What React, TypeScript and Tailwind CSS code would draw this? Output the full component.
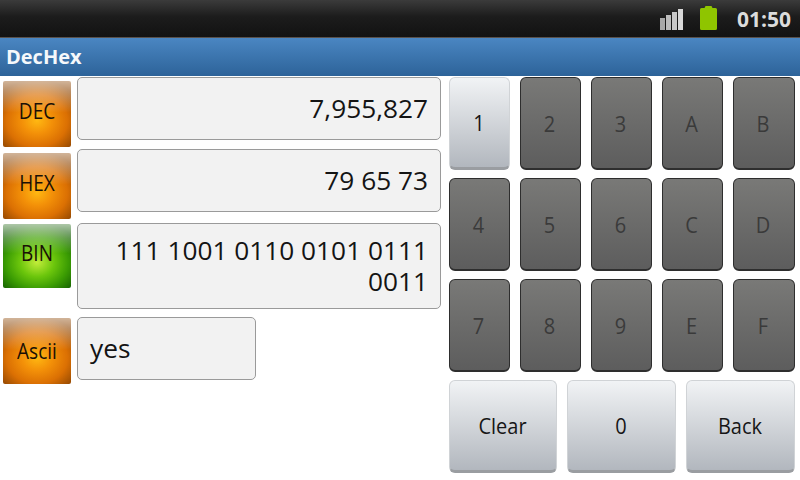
const orangeLabel =
  "bg-[linear-gradient(180deg,rgba(255,255,255,0.6)_0%,rgba(255,255,255,0.34)_20%,rgba(255,255,255,0)_48%),radial-gradient(ellipse_70%_62%_at_50%_60%,#ffb812_0%,#f39008_32%,#db7003_64%,#8c4402_100%)]";
const greenLabel =
  "bg-[linear-gradient(180deg,rgba(255,255,255,0.66)_0%,rgba(255,255,255,0.3)_22%,rgba(255,255,255,0)_46%),radial-gradient(ellipse_70%_62%_at_50%_60%,#c2ec3a_0%,#6cc60c_36%,#3b9c03_66%,#125c02_100%)]";

function Label({ text, green, h = "h-[66px]", drop = "pb-[6px]" }: { text: string; green?: boolean; h?: string; drop?: string }) {
  return (
    <div
      className={`w-[68px] ${h} ${drop} shrink-0 rounded-[2px] flex items-center justify-center text-[19px] text-[#1a1006] ${green ? greenLabel : orangeLabel}`}
    >
      <span className="inline-block scale-y-[1.15]">{text}</span>
    </div>
  );
}

function Field({ children, className }: { children: React.ReactNode; className: string }) {
  return (
    <div
      className={`bg-[#f2f2f2] border border-[#9a9a9a] rounded-[5px] text-[26.25px] leading-[31px] text-[#141414] ${className}`}
    >
      {children}
    </div>
  );
}

function Key({ text, on, className = "" }: { text: string; on?: boolean; className?: string }) {
  if (on) {
    return (
      <div
        className={`h-[93px] rounded-[6px] border border-[#d0d3d6] border-b-[3px] border-b-[#9a9da1] bg-[linear-gradient(180deg,#f1f3f5_0%,#b2b7be_100%)] flex items-center justify-center pt-[1px] pr-[1px] text-[20px] text-[#161616] ${className}`}
      >
        <span className="inline-block scale-y-[1.12]">{text}</span>
      </div>
    );
  }
  return (
    <div
      className={`h-[93px] rounded-[6px] border border-[#2e2e2e] border-b-2 bg-[linear-gradient(180deg,#797977_0%,#5d5d5d_100%)] flex items-center justify-center pt-[1px] pr-[2px] text-[20px] text-[#3a3a3a] ${className}`}
    >
      <span className="inline-block scale-y-[1.12]">{text}</span>
    </div>
  );
}

export default function App() {
  return (
    <div className="w-[800px] h-[480px] overflow-hidden bg-white font-['Open_Sans',sans-serif] flex flex-col">
      <div className="h-[37px] bg-[linear-gradient(180deg,#3b3b3b_0%,#1c1c1c_45%,#121212_100%)] flex items-start justify-end">
        <svg width="23" height="21" viewBox="0 0 23 21" className="mt-[9px] mr-[17px]">
          <rect x="0" y="9" width="5" height="12" fill="#a8a8a8" />
          <rect x="6" y="6" width="5" height="15" fill="#bcbcbc" />
          <rect x="12" y="3" width="5" height="18" fill="#c8c8c8" />
          <rect x="18" y="0" width="5" height="21" fill="#d8d8d8" />
        </svg>
        <svg width="17" height="24" viewBox="0 0 17 24" className="mt-[6px] mr-[20px]">
          <path
            d="M5.5 0h6l1 2h3a1.5 1.5 0 0 1 1.5 1.5v19a1.5 1.5 0 0 1-1.5 1.5h-14a1.5 1.5 0 0 1-1.5-1.5v-19a1.5 1.5 0 0 1 1.5-1.5h3z"
            fill="#8fc500"
          />
        </svg>
        <span className="mt-[9px] text-[21px] font-bold text-[#dcdcdc] mr-[9px] leading-none">01:50</span>
      </div>
      <div className="h-px bg-[#5a524c]" />
      <div className="h-[38px] bg-[linear-gradient(180deg,#4a86c2_0%,#2d6399_100%)] flex items-center pl-[6px] text-[20px] font-bold text-[#f5f8fb]">
        DecHex
      </div>
      <div className="flex pt-[1px]">
        <div className="w-[449px] shrink-0 pl-[3px] flex flex-col">
          <div className="h-[72px] flex gap-[6px]">
            <div className="pt-[4px]">
              <Label text="DEC" />
            </div>
            <Field className="w-[364px] h-[63px] flex items-center justify-end pr-[12px]">7,955,827</Field>
          </div>
          <div className="h-[74px] flex gap-[6px]">
            <div className="pt-[4px]">
              <Label text="HEX" />
            </div>
            <Field className="w-[364px] h-[63px] flex items-center justify-end pr-[12px]">79 65 73</Field>
          </div>
          <div className="h-[94px] flex gap-[6px]">
            <div className="pt-[1px]">
              <Label text="BIN" green h="h-[64px]" />
            </div>
            <Field className="w-[364px] h-[86px] flex items-center text-right pl-[12px] pr-[12px]">
              111 1001 0110 0101 0111 0011
            </Field>
          </div>
          <div className="flex gap-[6px]">
            <div className="pt-[1px]">
              <Label text="Ascii" drop="pb-0" />
            </div>
            <Field className="w-[179px] h-[63px] flex items-center pl-[12px]">yes</Field>
          </div>
        </div>
        <div className="w-[346px] flex flex-col gap-[8px]">
          <div className="grid grid-cols-[61px_61px_61px_61px_62px] gap-x-[10px] gap-y-[8px]">
            <Key text="1" on />
            <Key text="2" />
            <Key text="3" />
            <Key text="A" />
            <Key text="B" />
            <Key text="4" />
            <Key text="5" />
            <Key text="6" />
            <Key text="C" />
            <Key text="D" />
            <Key text="7" />
            <Key text="8" />
            <Key text="9" />
            <Key text="E" />
            <Key text="F" />
          </div>
          <div className="flex gap-[10px]">
            <Key text="Clear" on className="w-[108px]" />
            <Key text="0" on className="w-[109px]" />
            <Key text="Back" on className="w-[109px]" />
          </div>
        </div>
      </div>
    </div>
  );
}
